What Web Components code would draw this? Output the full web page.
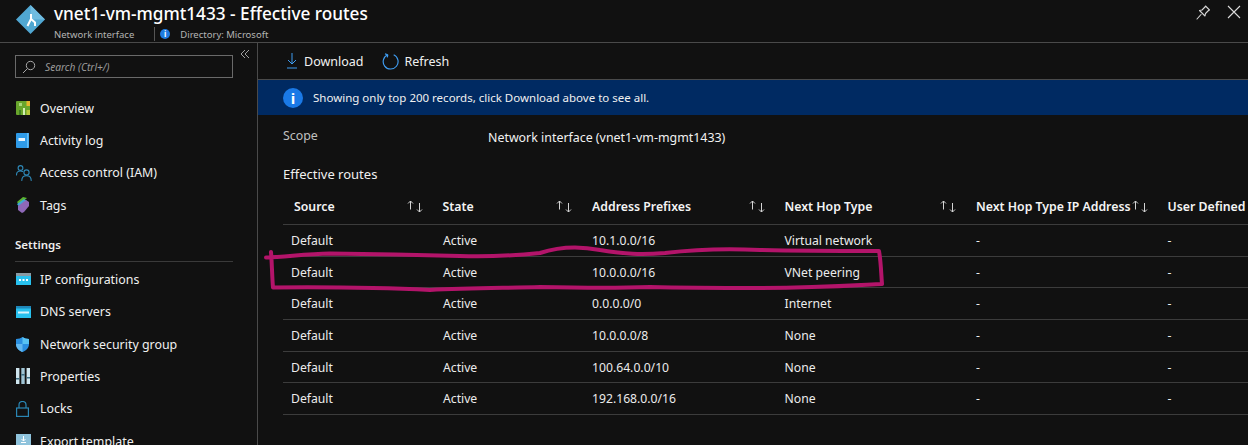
<!DOCTYPE html>
<html>
<head>
<meta charset="utf-8">
<style>
  html, body { margin: 0; height: 445px; overflow: hidden; background: #111; }
  body { font-family: "Noto Sans", "Open Sans", sans-serif; color: #f2f2f2; position: relative; }
</style>
</head>
<body>
<blade-page></blade-page>
<script>
const stroke = 'fill="none" stroke-linecap="round" stroke-linejoin="round"';

const icons = {
  overview: `<svg width="14" height="14" viewBox="0 0 14 14"><rect width="14" height="14" rx="1" fill="#68a52c"/><rect x="10.500" width="3.500" height="5" fill="#e3b62d"/><rect x="10.500" y="9" width="3.500" height="5" fill="#b7c83a"/><rect x="3" y="2" width="3" height="3" fill="#a9d67a"/><rect x="7" y="7" width="2" height="7" fill="#d5efb5"/><rect x="3" y="9" width="2" height="5" fill="#3f8020"/></svg>`,
  log: `<svg width="13" height="15" viewBox="0 0 13 15"><path d="M1 0h12v14a1 1 0 0 1-1 1H1a1 1 0 0 1-1-1V1a1 1 0 0 1 1-1z" fill="#2f9be8"/><rect x="2.500" y="5" width="6.500" height="3" fill="#e8f4fc"/><rect x="11" width="1.500" height="15" fill="#63bdf6"/></svg>`,
  iam: `<svg width="16" height="16" viewBox="0 0 16 16" ${stroke} stroke="#2f89b8" stroke-width="1.100"><circle cx="4.500" cy="3" r="2.400"/><path d="M.5 10c0-2.500 1.500-4 4-4 .8 0 1.500.2 2 .5"/><circle cx="10.500" cy="7.500" r="2.600"/><path d="M5.800 15.500c0-3 2-4.800 4.700-4.800s4.700 1.800 4.700 4.800"/></svg>`,
  tags: `<svg width="14" height="16" viewBox="0 0 14 16"><path d="M1 5l6-5 4 1L3 8z" fill="#5cb531"/><path d="M1 7l7-5 3 2-7 7z" fill="#3fa7d6"/><path d="M2 9l8-6 3 2v4l-5 6-2 1-4-3z" fill="#8e68b8"/></svg>`,
  ip: `<svg width="15" height="12" viewBox="0 0 15 12"><rect width="15" height="12" fill="#28c1ee"/><rect width="15" height="3" fill="#8a9aa3"/><rect x="3" y="6" width="2" height="2" fill="#fff"/><rect x="6.500" y="6" width="2" height="2" fill="#fff"/><rect x="10" y="6" width="2" height="2" fill="#fff"/></svg>`,
  dns: `<svg width="15" height="12" viewBox="0 0 15 12"><rect width="15" height="12" fill="#28c1ee"/><rect width="15" height="2.500" fill="#1f86b8"/><rect x="2" y="5.500" width="11" height="2" fill="#d8f3fb"/></svg>`,
  shield: `<svg width="13" height="15" viewBox="0 0 13 15"><path d="M6.500 0C8 1.300 10.500 2 13 2v5c0 4-3 6.700-6.500 8C3 13.700 0 11 0 7V2c2.500 0 5-.7 6.500-2z" fill="#2a8fe0"/><path d="M6.500 0C8 1.300 10.500 2 13 2v5H6.500z" fill="#58c3f2"/><path d="M0 7h6.500v8C3 13.700 0 11 0 7z" fill="#62b8f0"/></svg>`,
  props: `<svg width="14" height="16" viewBox="0 0 14 16"><rect width="3.400" height="16" fill="#cfe6ef"/><rect x="5.300" width="3.400" height="16" fill="#9fc4d4"/><rect x="10.600" width="3.400" height="16" fill="#cfe6ef"/><rect y="10" width="3.400" height="1.500" fill="#3d6d82"/><rect x="5.300" y="6" width="3.400" height="1.500" fill="#3d6d82"/><rect x="10.600" y="9" width="3.400" height="1.500" fill="#3d6d82"/></svg>`,
  lock: `<svg width="13" height="16" viewBox="0 0 13 16" fill="none" stroke="#2a86b4" stroke-width="1.200"><rect x=".6" y="7" width="11.800" height="8.400"/><path d="M3 7V4a3.500 3.500 0 0 1 7 0v3"/></svg>`,
  exp: `<svg width="15" height="14" viewBox="0 0 15 14"><rect width="15" height="11" fill="#8fc3dc"/><rect x="5" y="11" width="5" height="3" fill="#7a8c96"/><path d="M7.500 2v5M5.500 5l2 2 2-2M5 8.500h5" fill="none" stroke="#fff" stroke-width="1"/></svg>`
};

class BladeHeader extends HTMLElement {
  connectedCallback() {
    this.attachShadow({ mode: 'open' });
    this.shadowRoot.innerHTML = `
      <style>
        :host { display: flex; height: 42px; border-bottom: 1px solid #4a4a4a; padding-left: 16px; }
        .logo { width: 29px; height: 29px; margin-top: 5px; flex: none; }
        .titles { margin-left: 9px; flex: 1; }
        h1 { margin: 0; font-size: 17.200px; line-height: 22px; font-weight: 500; color: #fff; padding-top: 3px; }
        .sub { display: flex; align-items: center; font-size: 9.500px; color: #b4b4b4; height: 14px; margin-top: 2px; }
        .sep { width: 1px; height: 14px; background: #555; margin: 0 5px 0 20px; }
        .info { width: 10px; height: 10px; border-radius: 50%; background: #1f7be0; color: #fff; font-size: 8px; line-height: 10px; text-align: center; font-weight: 700; margin-right: 10px; }
        .actions { display: flex; gap: 16px; padding: 5px 7px 0 0; }
      </style>
      <svg class="logo" viewBox="0 0 29 29">
        <path d="M14.500 0L29 14.500 14.500 29 0 14.500z" fill="#50a7d2"/>
        <path d="M14.500 0L29 14.500H14.500z" fill="#6fbce0"/>
        <path d="M15 9v5M15 14l-3.500 7M15 14l4 3.500v3.500" fill="none" stroke="#fff" stroke-width="2"/>
      </svg>
      <div class="titles">
        <h1>vnet1-vm-mgmt1433 - Effective routes</h1>
        <div class="sub"><span>Network interface</span><span class="sep"></span><span class="info">i</span><span>Directory: Microsoft</span></div>
      </div>
      <div class="actions">
        <svg width="15" height="15" viewBox="0 0 15 15" ${stroke} stroke="#d6d6d6" stroke-width="1.100"><path d="M9.500 1l4 4-1 .5-3 3-.5 2.500-5.500-5.500L6 5l3-3zM5 9.500L1 14"/></svg>
        <svg width="14" height="14" viewBox="0 0 14 14" stroke="#dcdcdc" stroke-width="1.100"><path d="M1 1l12 12M13 1L1 13"/></svg>
      </div>`;
  }
}
customElements.define('blade-header', BladeHeader);

class NavItem extends HTMLElement {
  connectedCallback() {
    this.attachShadow({ mode: 'open' });
    this.shadowRoot.innerHTML = `
      <style>
        :host { display: flex; align-items: center; height: 32.400px; padding-left: 15px; font-size: 12.400px; color: #f0f0f0; }
        .ic { width: 25px; display: flex; align-items: center; flex: none; }
        .ic svg { margin-left: 1px; }
      </style>
      <span class="ic">${icons[this.getAttribute('icon')] || ''}</span><slot></slot>`;
  }
}
customElements.define('nav-item', NavItem);

class SideBar extends HTMLElement {
  connectedCallback() {
    this.attachShadow({ mode: 'open' });
    this.shadowRoot.innerHTML = `
      <style>
        :host { display: block; width: 257px; flex: none; border-right: 1px solid #4a4a4a; overflow: hidden; position: relative; }
        .search { display: flex; align-items: center; width: 216px; height: 21px; margin: 12px 0 0 15px; border: 1px solid #6a6a6a; color: #9a9a9a; font-size: 10.200px; font-style: italic; }
        .search svg { margin: 0 9px 0 6px; }
        .collapse { position: absolute; left: 240px; top: 6px; }
        .items { margin-top: 14px; }
        h2 { margin: 13px 15px 0; font-size: 11.500px; font-weight: 600; line-height: 20px; color: #eee; padding-bottom: 6px; border-bottom: 1px solid #3a3a3a; width: 218px; }
        .after { padding-top: 1.500px; }
      </style>
      <div class="search">
        <svg width="14" height="14" viewBox="0 0 14 14" fill="none" stroke="#a8a8a8" stroke-width="1"><circle cx="8.500" cy="5.500" r="4.200"/><path d="M5.500 8.500L1 13"/></svg>
        <span>Search (Ctrl+/)</span>
      </div>
      <svg class="collapse" width="10" height="10" viewBox="0 0 10 10" fill="none" stroke="#a0a0a0" stroke-width="1"><path d="M5 1L1 5l4 4M9 1L5 5l4 4"/></svg>
      <div class="items">
        <nav-item icon="overview">Overview</nav-item>
        <nav-item icon="log">Activity log</nav-item>
        <nav-item icon="iam">Access control (IAM)</nav-item>
        <nav-item icon="tags">Tags</nav-item>
      </div>
      <h2>Settings</h2>
      <div class="after">
        <nav-item icon="ip">IP configurations</nav-item>
        <nav-item icon="dns">DNS servers</nav-item>
        <nav-item icon="shield">Network security group</nav-item>
        <nav-item icon="props">Properties</nav-item>
        <nav-item icon="lock">Locks</nav-item>
        <nav-item icon="exp">Export template</nav-item>
      </div>`;
  }
}
customElements.define('side-bar', SideBar);

class ToolBar extends HTMLElement {
  connectedCallback() {
    this.attachShadow({ mode: 'open' });
    this.shadowRoot.innerHTML = `
      <style>
        :host { display: flex; align-items: center; height: 36px; border-bottom: 1px solid #4a4a4a; font-size: 12.500px; color: #f0f0f0; padding-left: 28px; }
        span { display: flex; align-items: center; }
        .dl svg { margin-right: 6px; }
        .rf { margin-left: 19px; }
        .rf svg { margin-right: 5px; }
      </style>
      <span class="dl"><svg width="12" height="16" viewBox="0 0 12 16" fill="none" stroke="#3f9cf0" stroke-width="1"><path d="M6 0v11M2 7l4 4 4-4M1 15h10"/></svg>Download</span>
      <span class="rf"><svg width="17" height="17" viewBox="0 0 16 16" fill="none" stroke="#3f9cf0" stroke-width="1.100"><path d="M5.500 1.600A7 7 0 1 0 11 1.700M5.500 1.600L2.800.8M5.500 1.600L5 4.200"/></svg>Refresh</span>`;
  }
}
customElements.define('tool-bar', ToolBar);

class InfoBanner extends HTMLElement {
  connectedCallback() {
    this.attachShadow({ mode: 'open' });
    this.shadowRoot.innerHTML = `
      <style>
        :host { display: flex; align-items: center; height: 35px; background: #002a62; font-size: 11.500px; color: #f0f0f0; padding-left: 25px; }
        i { width: 20px; height: 20px; border-radius: 50%; background: #1a79e6; color: #fff; font: 700 15px/20px "Noto Sans", sans-serif; text-align: center; margin-right: 10px; }
      </style>
      <i>i</i><slot></slot>`;
  }
}
customElements.define('info-banner', InfoBanner);

class RoutesTable extends HTMLElement {
  connectedCallback() {
    this.attachShadow({ mode: 'open' });
    const cols = ['Source', 'State', 'Address Prefixes', 'Next Hop Type', 'Next Hop Type IP Address', 'User Defined'];
    const rows = [
      ['Default', 'Active', '10.1.0.0/16', 'Virtual network'],
      ['Default', 'Active', '10.0.0.0/16', 'VNet peering'],
      ['Default', 'Active', '0.0.0.0/0', 'Internet'],
      ['Default', 'Active', '10.0.0.0/8', 'None'],
      ['Default', 'Active', '100.64.0.0/10', 'None'],
      ['Default', 'Active', '192.168.0.0/16', 'None']
    ];
    const sort = `<svg width="16" height="13" viewBox="0 0 16 13" fill="none" stroke="#d4d4d4" stroke-width="1"><path d="M3.500 9.500V1M1 3.500l2.500-2.500 2.500 2.500M12.500 3v9M10 9.500l2.500 2.500 2.500-2.500"/></svg>`;
    const head = cols.map((c, i) => `<div class="th${i === 0 ? ' first' : ''}"><span>${c}</span>${i < 5 ? sort : ''}</div>`).join('');
    const body = rows.map(r => `<div class="row">${r.map(c => `<div class="td">${c}</div>`).join('')}<div class="td">-</div><div class="td">-</div></div>`).join('');
    this.shadowRoot.innerHTML = `
      <style>
        :host { display: block; font-size: 12.200px; color: #ececec; margin-top: 5px; }
        .row, .head { display: grid; grid-template-columns: 149.500px 149.500px 192.500px 191.500px 191.500px 200px; border-bottom: 1px solid #3c3c3c; }
        .head { height: 35px; align-items: center; font-weight: 600; color: #f4f4f4; font-size: 12.300px; }
        .row { height: 30.700px; align-items: center; }
        .th { display: flex; align-items: center; justify-content: space-between; padding: 0 10px; white-space: nowrap; }
        .th.first { padding-left: 11px; }
        .td { padding-left: 10px; white-space: nowrap; }
        .td:first-child { padding-left: 8px; }
        .td:nth-child(2) { padding-left: 10.500px; }
        .th span { flex: none; }
      </style>
      <div class="head">${head}</div>${body}`;
  }
}
customElements.define('routes-table', RoutesTable);

class ContentPane extends HTMLElement {
  connectedCallback() {
    this.attachShadow({ mode: 'open' });
    this.shadowRoot.innerHTML = `
      <style>
        :host { display: block; flex: 1; min-width: 0; overflow: hidden; }
        .wrap { padding-left: 25px; width: 1000px; }
        .scope { display: grid; grid-template-columns: 205px 1fr; font-size: 12.400px; margin-top: 14px; line-height: 18px; }
        .scope .k { color: #c0c0c0; margin-top: -2px; }
        h3 { margin: 17px 0 0; font-size: 13px; font-weight: 400; line-height: 20px; color: #f0f0f0; }
      </style>
      <tool-bar></tool-bar>
      <info-banner>Showing only top 200 records, click Download above to see all.</info-banner>
      <div class="wrap">
        <div class="scope"><span class="k">Scope</span><span>Network interface (vnet1-vm-mgmt1433)</span></div>
        <h3>Effective routes</h3>
        <routes-table></routes-table>
      </div>`;
  }
}
customElements.define('content-pane', ContentPane);

class BladePage extends HTMLElement {
  connectedCallback() {
    this.attachShadow({ mode: 'open' });
    this.shadowRoot.innerHTML = `
      <style>
        :host { display: block; width: 1248px; height: 445px; overflow: hidden; position: relative; background: #111; }
        .main { display: flex; height: 402px; }
        .ink { position: absolute; left: 0; top: 0; pointer-events: none; }
      </style>
      <blade-header></blade-header>
      <div class="main"><side-bar></side-bar><content-pane></content-pane></div>
      <svg class="ink" width="1248" height="445" fill="none" stroke="#b3146a" stroke-width="4" stroke-linecap="round" stroke-linejoin="round">
        <path d="M266 257.500C285 257 305 254 330 253.500C370 254 420 255 460 256C490 257 510 256 540 253C558 247 580 246 600 250C625 254 640 255 665 253C690 250 720 248 760 250C800 251 840 251 879 251C881 262 881 272 882 284C860 285 820 288 760 288C720 288 690 288 650 287C620 288 590 288 540 287C510 288 470 288 430 290C390 288 330 287 273 287.500C272 276 272 264 271 252"/>
      </svg>`;
  }
}
customElements.define('blade-page', BladePage);
</script>
</body>
</html>
